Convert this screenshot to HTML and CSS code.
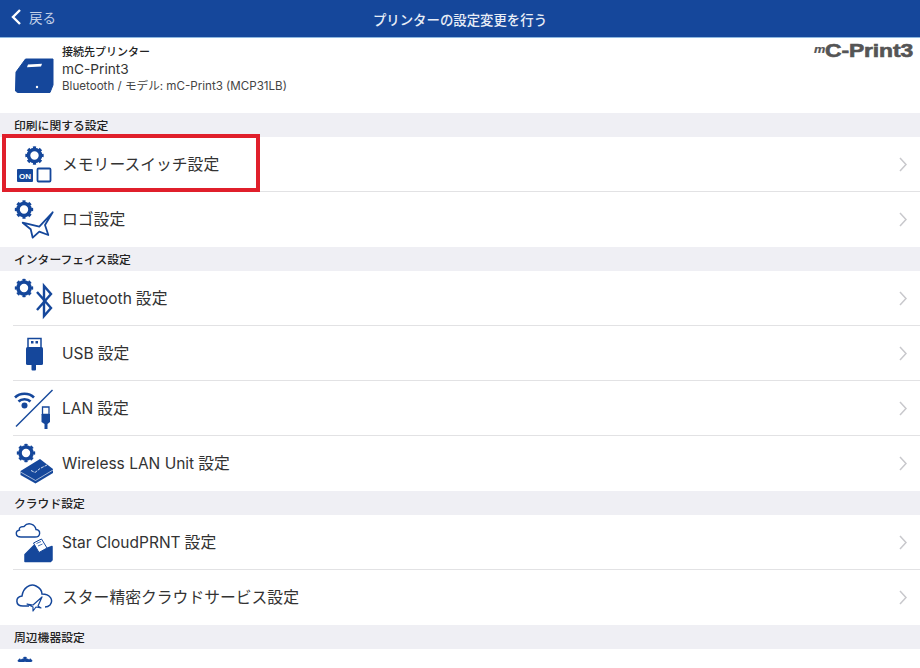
FILE: index.html
```html
<!DOCTYPE html>
<html lang="ja">
<head>
<meta charset="utf-8">
<title>プリンターの設定変更を行う</title>
<link rel="stylesheet" href="styles.css">
</head>
<body>
<svg class="defs" width="0" height="0" aria-hidden="true">
  <defs>
    <g id="gear">
      <circle r="6" fill="none" stroke="currentColor" stroke-width="3.6"/>
      <circle r="8" fill="none" stroke="currentColor" stroke-width="2.4" pathLength="8" stroke-dasharray="0.5 0.5" stroke-dashoffset="0.25"/>
    </g>
    <path id="chev" d="M1 1l6 6.5-6 6.5" fill="none" stroke="currentColor" stroke-width="1.5"/>
  </defs>
</svg>
<div class="app">
  <nav class="nav">
    <a class="back"><svg width="12" height="18" viewBox="0 0 12 18"><path d="M10 2L3 9l7 7" fill="none" stroke="#fff" stroke-width="2.4"/></svg><span>戻る</span></a>
    <h1>プリンターの設定変更を行う</h1>
  </nav>
  <header class="printer">
    <svg class="pic" width="62" height="75" viewBox="0 0 62 75">
      <path d="M16 34L25.500 21H53V47L50 54.500H17.500L15.500 53Z" fill="#15479b" stroke="#15479b" stroke-linejoin="round"/>
      <path d="M28 26.500L42 25.800L41 28.600L27 29.200Z" fill="#fff"/>
      <circle cx="37" cy="49" r="1.200" fill="#fff"/>
    </svg>
    <div class="info">
      <h2>接続先プリンター</h2>
      <p class="name">mC-Print3</p>
      <p class="model">Bluetooth / モデル: mC-Print3 (MCP31LB)</p>
    </div>
    <div class="logo"><i>m</i>C-Print3</div>
  </header>

  <h3 class="sec">印刷に関する設定</h3>
  <ul class="group">
    <li class="row">
      <svg class="ico" viewBox="0 0 62 55"><use href="#gear" x="34.500" y="18.500"/>
        <rect x="17" y="32" width="16" height="13" rx="1" fill="currentColor"/>
        <text x="25" y="41.500" class="on">ON</text>
        <rect x="37.500" y="31.500" width="13" height="13" rx="1" fill="none" stroke="currentColor" stroke-width="1.800"/></svg>
      <span class="label ja">メモリースイッチ設定</span><svg class="chev" width="8" height="15"><use href="#chev"/></svg>
    </li>
    <li class="row">
      <svg class="ico" viewBox="0 0 62 55"><use href="#gear" x="24" y="17.500"/>
        <path d="M52.700 20.300L39.300 34.700L22.700 30.700L30.700 37.300L32.700 45.700L39.300 39.700L48.300 43L45 33Z" fill="none" stroke="currentColor" stroke-width="1.800" stroke-linejoin="round"/></svg>
      <span class="label ja">ロゴ設定</span><svg class="chev" width="8" height="15"><use href="#chev"/></svg>
    </li>
  </ul>

  <h3 class="sec">インターフェイス設定</h3>
  <ul class="group">
    <li class="row">
      <svg class="ico" viewBox="0 0 62 55"><use href="#gear" x="24" y="17"/>
        <path d="M37 21L51 37L44 45V15L51 23L37 39" fill="none" stroke="currentColor" stroke-width="2.400"/></svg>
      <span class="label">Bluetooth<b class="ja">設定</b></span><svg class="chev" width="8" height="15"><use href="#chev"/></svg>
    </li>
    <li class="row">
      <svg class="ico" viewBox="0 0 62 55">
        <path d="M28 12.500H41V22H28Z" fill="#fff" stroke="currentColor" stroke-width="1.500"/>
        <rect x="31" y="15" width="2.500" height="2.500" fill="currentColor"/><rect x="35.500" y="15" width="2.500" height="2.500" fill="currentColor"/>
        <rect x="26" y="21" width="17" height="18" rx="1.500" fill="currentColor"/>
        <rect x="31.500" y="38" width="4.500" height="6.500" rx="1" fill="currentColor"/></svg>
      <span class="label">USB<b class="ja">設定</b></span><svg class="chev" width="8" height="15"><use href="#chev"/></svg>
    </li>
    <li class="row">
      <svg class="ico" viewBox="0 0 62 55">
        <path d="M15 16.500C20 11.500 29 11.500 34 16.500M18.500 20.500C21.500 17.500 27.500 17.500 30.500 20.500" fill="none" stroke="currentColor" stroke-width="2.600"/>
        <circle cx="24.500" cy="24.500" r="3" fill="currentColor"/>
        <path d="M52.500 9L16 45.500" stroke="currentColor" stroke-width="1.400"/>
        <path d="M42.500 26H49V33.500H42.500Z" fill="#fff" stroke="currentColor" stroke-width="1.300"/>
        <path d="M41.500 33H50V41L47.500 43V48H44.500V43L41.500 41Z" fill="currentColor"/></svg>
      <span class="label">LAN<b class="ja">設定</b></span><svg class="chev" width="8" height="15"><use href="#chev"/></svg>
    </li>
    <li class="row">
      <svg class="ico" viewBox="0 0 62 55"><use href="#gear" x="26" y="17"/>
        <path d="M20.500 35L40 23L53 33V37L35.500 47.500L20.500 39Z" fill="currentColor"/>
        <path d="M20.500 36L35.500 44.500L53 34" fill="none" stroke="#fff" stroke-width=".6"/>
        <path d="M31 34.500L35 36.500L40 32.500L47 29" fill="none" stroke="#fff" stroke-width=".8" stroke-dasharray="3 1"/></svg>
      <span class="label">Wireless LAN Unit<b class="ja">設定</b></span><svg class="chev" width="8" height="15"><use href="#chev"/></svg>
    </li>
  </ul>

  <h3 class="sec">クラウド設定</h3>
  <ul class="group">
    <li class="row">
      <svg class="ico" viewBox="0 0 62 55">
        <path d="M21 22H35C41 22 41 15 36 14.500C35 9 28 6.500 24 11.500C19 11.500 19 14 19.500 15C15 16 15 22 21 22Z" fill="none" stroke="currentColor" stroke-width="1.400"/>
        <path d="M25 46.500V39.500L34 30.500L44 34.500L52 31.500V45L50.500 46.500Z" fill="currentColor" stroke="currentColor" stroke-width="1.500" stroke-linejoin="round"/>
        <path d="M33.500 28L41.500 24L47 33L39 37.500Z" fill="#fff" stroke="currentColor" stroke-width="1"/>
        <path d="M36.500 28.500L41 26.500M38 31L42.500 29" stroke="currentColor" stroke-width=".8"/></svg>
      <span class="label">Star CloudPRNT<b class="ja">設定</b></span><svg class="chev" width="8" height="15"><use href="#chev"/></svg>
    </li>
    <li class="row">
      <svg class="ico" viewBox="0 0 62 55">
        <path d="M29 36H23C15 36 15 27 22 26C23 18 30 13 36 16C40 18 42 21 42 24C50 24 54 30 50 35C49 36 47 37 45 37" fill="none" stroke="currentColor" stroke-width="1.500"/>
        <path d="M27 34L33 35L42 27L38 36L41 38L36 37L33 41L33 37Z" fill="#fff" stroke="currentColor" stroke-width="1.200" stroke-linejoin="round"/></svg>
      <span class="label ja">スター精密クラウドサービス設定</span><svg class="chev" width="8" height="15"><use href="#chev"/></svg>
    </li>
  </ul>

  <h3 class="sec">周辺機器設定</h3>
  <ul class="group">
    <li class="row">
      <svg class="ico" viewBox="0 0 62 55"><use href="#gear" x="25" y="17"/></svg>
    </li>
  </ul>
  <div class="highlight"></div>
</div>
</body>
</html>
```

FILE: styles.css
```css
* { box-sizing: border-box; }
html, body { margin: 0; padding: 0; background: #fff; }
body {
  font-family: "Inter", "Noto Sans CJK JP", sans-serif;
  color: #333;
}
.defs { position: absolute; }
.app {
  position: relative;
  width: 920px;
  height: 662px;
  overflow: hidden;
  background: #fff;
}
.nav {
  height: 38px;
  background: #15479b;
  border-bottom: 1px solid #8db8e0;
  display: flex;
  align-items: center;
  justify-content: center;
  position: relative;
  color: #fff;
}
.nav h1 {
  margin: 0;
  font-size: 13.400px;
  font-weight: 500;
  color: #e8edf6;
  font-family: "Noto Sans CJK JP", sans-serif;
}
.back {
  position: absolute;
  left: 10px;
  top: 7px;
  display: flex;
  align-items: center;
  gap: 7px;
  font-size: 13.500px;
  color: #c3d1e8;
}
.printer {
  height: 75px;
  display: flex;
  align-items: flex-start;
  background: #fff;
}
.pic { flex: none; }
.info { flex: 1; padding-top: 5px; }
.info h2 {
  margin: 0;
  font-size: 11px;
  line-height: 16px;
  font-weight: 500;
  color: #222;
  font-family: "Noto Sans CJK JP", sans-serif;
}
.info p { margin: 0; }
.name { font-size: 13.700px; line-height: 20px; color: #333; }
.model { font-size: 11.600px; line-height: 14px; color: #444; }
.logo {
  flex: none;
  margin: 0 7px 0 0;
  font-family: "Liberation Sans", sans-serif;
  font-weight: 700;
  font-size: 18px;
  line-height: 24px;
  letter-spacing: -.1px;
  color: #555;
  -webkit-text-stroke: .6px #555;
  transform: scaleX(1.270);
  transform-origin: right center;
}
.logo i { font-size: 10px; vertical-align: 4px; -webkit-text-stroke: .2px #555; }
.sec {
  margin: 0;
  height: 24px;
  padding-left: 14px;
  background: #efeff4;
  font-size: 11.800px;
  line-height: 24px;
  font-weight: 500;
  color: #222;
  font-family: "Noto Sans CJK JP", sans-serif;
}
.group { list-style: none; margin: 0; padding: 0; }
.row {
  position: relative;
  height: 55px;
  display: flex;
  align-items: center;
  color: #333;
}
.row + .row::before {
  content: "";
  position: absolute;
  left: 13px;
  right: 0;
  top: -1px;
  height: 1px;
  background: #e2e2e4;
}
.ico { flex: none; width: 62px; height: 55px; color: #15479b; }
.label {
  flex: 1;
  font-size: 15.500px;
  padding-bottom: 2px;
}
.ja {
  font-family: "Noto Sans CJK JP", sans-serif;
  font-size: 15.800px;
  font-weight: 400;
}
.label b { margin-left: 4px; }
.chev { flex: none; margin: 0 13px 1px 0; color: #c8c8cc; }
.on {
  font-family: "Liberation Sans", sans-serif;
  font-size: 8px;
  font-weight: 700;
  fill: #fff;
  text-anchor: middle;
}
.highlight {
  position: absolute;
  left: 2px;
  top: 134px;
  width: 258px;
  height: 58px;
  border: 4px solid #e01f2b;
}
```
